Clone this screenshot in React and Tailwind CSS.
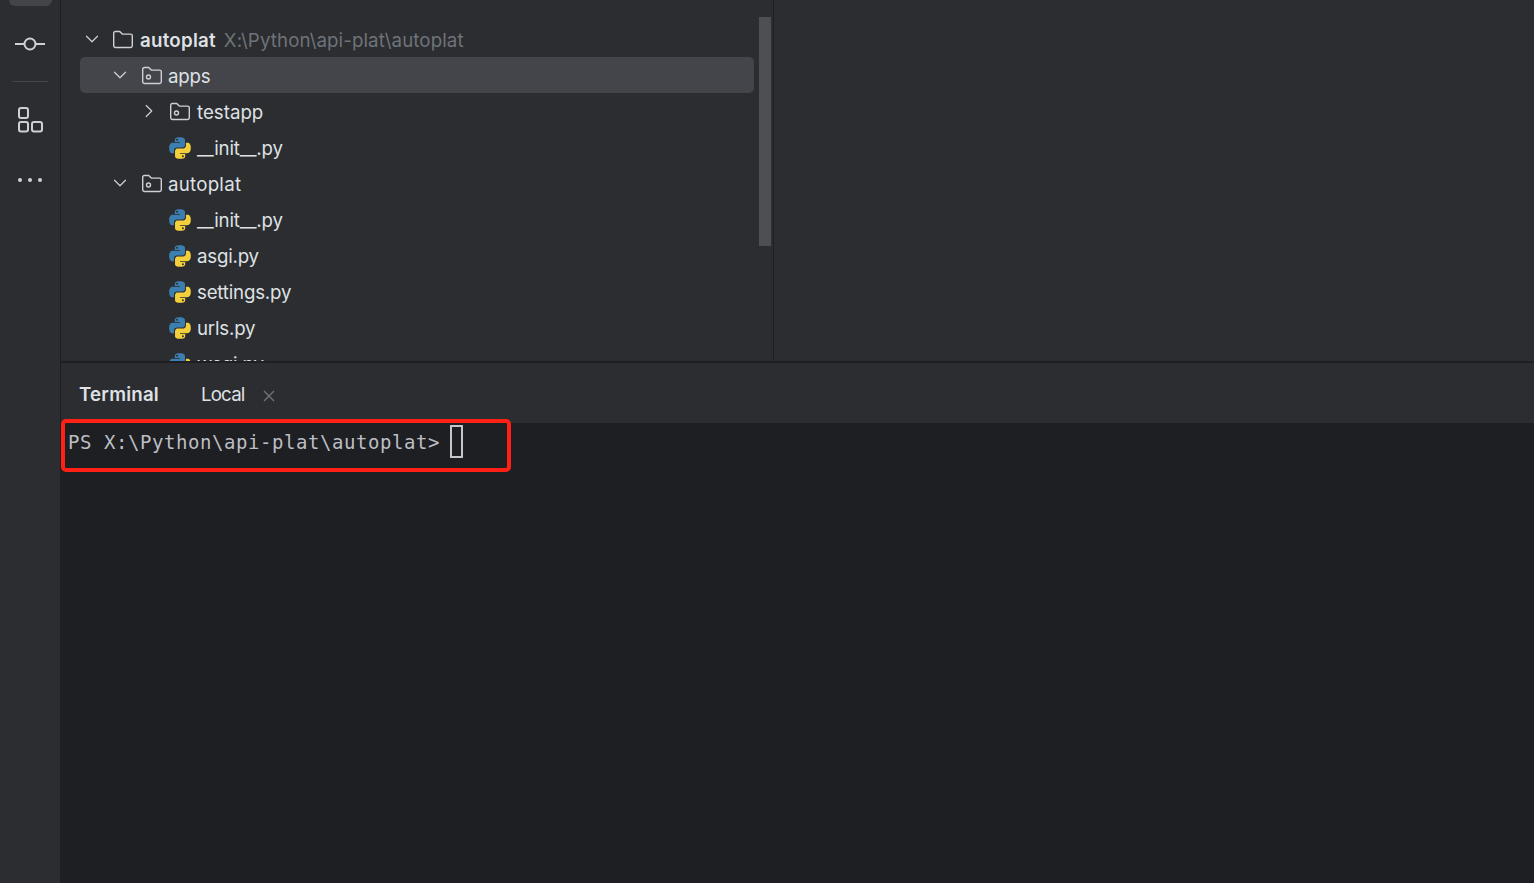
import { ChevronDown, ChevronRight } from "lucide-react";

const PY_PATH =
    "M11.9 2c-5 0-4.7 2.2-4.7 2.2v2.3h4.8v.7H5.3S2 6.8 2 11.9s2.8 4.9 2.8 4.9h1.7v-2.4s-.1-2.8 2.8-2.8h4.7s2.6 0 2.6-2.6V4.6S17 2 11.9 2zM9.3 3.5a.9.9 0 110 1.8.9.9 0 010-1.8z";

function PythonIcon() {
    return (
        <svg viewBox="0 0 24 24" className="w-[26px] h-[26px] shrink-0 -ml-[2px] -mr-[2px] -mt-[3px]">
            <path d={PY_PATH} fill="#3d7eb0" fillRule="evenodd" />
            <path
                d={PY_PATH}
                fill="#f4cf3d"
                fillRule="evenodd"
                transform="rotate(180 12 12)"
            />
        </svg>
    );
}

function FolderIcon({ dot, nudge }) {
    return (
        <svg
            viewBox="0 0 22 22"
            fill="none"
            stroke="#ced0d6"
            strokeWidth="1.4"
            className={`w-[22px] h-[22px] shrink-0 -mt-[3px] ${nudge ? "translate-x-[1px]" : ""}`}
        >
            <path d="M1.7 4.2a1.7 1.7 0 0 1 1.7-1.7h4.3l2.6 2.6h8.3a1.7 1.7 0 0 1 1.7 1.7v10a1.7 1.7 0 0 1-1.7 1.7H3.4a1.7 1.7 0 0 1-1.7-1.7z" />
            {dot && <circle cx="7.5" cy="12" r="2" />}
        </svg>
    );
}

function Row({ indent, open, icon, selected, children }) {
    return (
        <div
            className={`h-9 pt-[4px] flex items-center rounded-[5px] ${indent} ${
                selected ? "bg-[#43454a]" : ""
            }`}
        >
            <span className="w-[14px] ml-[1px] mr-[13px] flex justify-center text-[#ced0d6]">
                {open === true && <ChevronDown size={22} strokeWidth={1.3} className="shrink-0 -mt-[4px]" />}
                {open === false && <ChevronRight size={22} strokeWidth={1.3} className="shrink-0 -mt-[4px]" />}
            </span>
            {icon}
            <span className="ml-[6px] flex items-baseline whitespace-nowrap">{children}</span>
        </div>
    );
}

function PyRow({ name }) {
    return (
        <Row indent="pl-[61px]" icon={<PythonIcon />}>
            <span className="tracking-[-0.2px]">{name}</span>
        </Row>
    );
}

export default function App() {
    return (
        <div className="w-[1534px] h-[883px] flex overflow-hidden bg-[#1e1f22] font-['Inter',sans-serif] text-[18.7px] text-[#dfe1e5] relative">
            {/* Left rail */}
            <div className="w-[61px] shrink-0 bg-[#2b2d30] border-r border-[#1e1f22] flex flex-col items-center relative">
                <div className="absolute top-0 left-[9px] w-[43px] h-[6px] rounded-b-[8px] bg-[#43454a]"></div>
                <svg viewBox="0 0 30 14" fill="none" stroke="#ced0d6" strokeWidth="2" className="w-[30px] h-[14px] mt-[37px]">
                    <path d="M0 7h9M21 7h9" />
                    <circle cx="15" cy="7" r="5.5" />
                </svg>
                <div className="w-9 h-px bg-[#43454a] mt-[30px]"></div>
                <svg viewBox="0 0 26 26" fill="none" stroke="#ced0d6" strokeWidth="2" className="w-[26px] h-[26px] mt-[25px]">
                    <rect x="2" y="1" width="9" height="10" rx="2" />
                    <rect x="2" y="15" width="9" height="9.5" rx="2" />
                    <rect x="15" y="15" width="10" height="9.5" rx="2" />
                </svg>
                <div className="flex gap-[6px] mt-[45px]">
                    <span className="w-1 h-1 rounded-full bg-[#ced0d6]"></span>
                    <span className="w-1 h-1 rounded-full bg-[#ced0d6]"></span>
                    <span className="w-1 h-1 rounded-full bg-[#ced0d6]"></span>
                </div>
            </div>

            <div className="flex-1 flex flex-col min-w-0">
                {/* Top: project tree and editor */}
                <div className="h-[361px] shrink-0 flex bg-[#2b2d30]">
                    <div className="w-[713px] shrink-0 border-r border-[#1e1f22] relative overflow-hidden pt-[21px] pl-[19px]">
                        <div className="w-[674px]">
                            <Row indent="pl-[4px]" open={true} icon={<FolderIcon />}>
                                <span className="font-semibold tracking-[0.25px]">autoplat</span>
                                <span className="ml-2 tracking-[0.1px] text-[#6f737a]">X:\Python\api-plat\autoplat</span>
                            </Row>
                            <Row indent="pl-[32px]" open={true} icon={<FolderIcon dot nudge />} selected>
                                <span className="tracking-[-0.25px]">apps</span>
                            </Row>
                            <Row indent="pl-[61px]" open={false} icon={<FolderIcon dot />}>testapp</Row>
                            <PyRow name="__init__.py" />
                            <Row indent="pl-[32px]" open={true} icon={<FolderIcon dot nudge />}>
                                <span className="tracking-[0.25px]">autoplat</span>
                            </Row>
                            <PyRow name="__init__.py" />
                            <PyRow name="asgi.py" />
                            <PyRow name="settings.py" />
                            <PyRow name="urls.py" />
                            <PyRow name="wsgi.py" />
                        </div>
                        <div className="absolute top-[17px] left-[698px] w-3 h-[229px] bg-[#4d4f53]"></div>
                    </div>
                    <div className="flex-1"></div>
                </div>

                {/* Terminal */}
                <div className="h-[2px] bg-[#1e1f22]"></div>
                <div className="h-[60px] shrink-0 bg-[#2b2d30] flex items-center pl-[18px] pt-[5px]">
                    <span className="font-semibold tracking-[0.2px]">Terminal</span>
                    <span className="ml-[42px] tracking-[-0.8px]">Local</span>
                    <svg viewBox="0 0 12 12" stroke="#6f737a" strokeWidth="1.4" className="w-3 h-3 ml-[18px]">
                        <path d="M1 1l10 10M11 1L1 11" />
                    </svg>
                </div>
                <div className="flex-1 pl-[7px] pt-[2px] flex items-start font-['DejaVu_Sans_Mono',monospace] text-[19px] tracking-[0.56px] text-[#bcbec4]">
                    <span className="leading-[34px] whitespace-pre">{"PS X:\\Python\\api-plat\\autoplat> "}</span>
                    <span className="w-[13px] h-[33px] ml-[-2px] border-2 border-[#c4c6cc]"></span>
                </div>
            </div>

            {/* Red annotation box */}
            <div className="absolute left-[61px] top-[419px] w-[450px] h-[53px] border-[4px] border-[#ff2016] rounded-[5px]"></div>
        </div>
    );
}
